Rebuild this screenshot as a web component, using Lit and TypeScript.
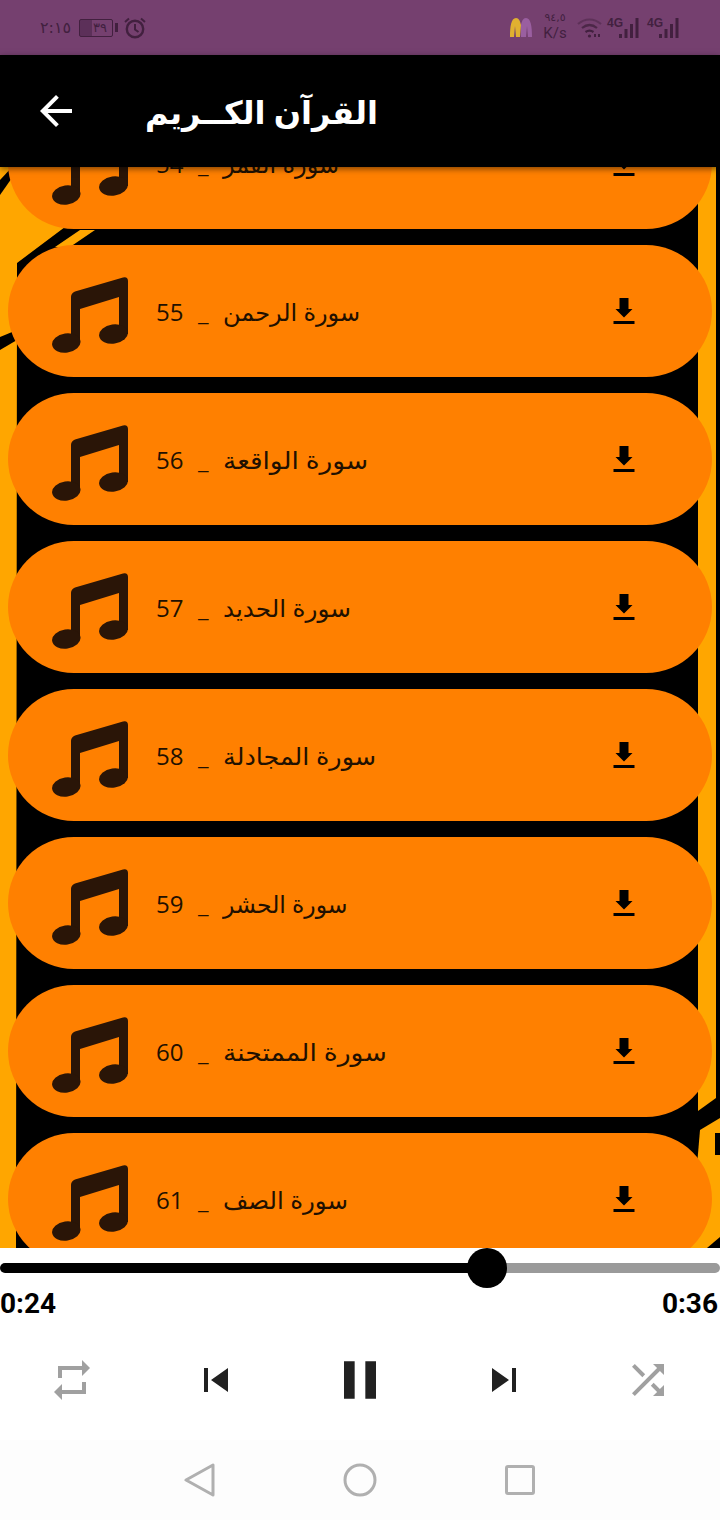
import { LitElement, html, css, svg } from "lit";
import { customElement } from "lit/decorators.js";

const SURAHS: [number, string, number][] = [
  [54, "سورة القمر", 1.0],
  [55, "سورة الرحمن", 1.0],
  [56, "سورة الواقعة", 1.1],
  [57, "سورة الحديد", 1.03],
  [58, "سورة المجادلة", 1.06],
  [59, "سورة الحشر", 0.98],
  [60, "سورة الممتحنة", 1.11],
  [61, "سورة الصف", 1.02],
];

const signal = svg`
  <rect x="0" y="16" width="3" height="4"/>
  <rect x="5.5" y="11" width="3" height="9"/>
  <rect x="11" y="6" width="3" height="14"/>
  <rect x="16.5" y="0" width="3" height="20"/>`;

@customElement("app-root")
export class AppRoot extends LitElement {
  static styles = css`
    :host { display: block; width: 720px; height: 1520px; overflow: hidden; font-family: "Open Sans", "DejaVu Sans", sans-serif; }
    .page { display: flex; flex-direction: column; height: 1520px; }

    .status { flex: 0 0 55px; background: #75406f; display: flex; justify-content: space-between; align-items: center; padding: 0 41px 0 40px; color: #42203f; }
    .status svg { display: block; fill: currentColor; }
    .group { display: flex; align-items: center; }
    .clock { font: 16px "DejaVu Sans", sans-serif; width: 29px; margin-right: 10px; }
    .battery { width: 34px; height: 18px; border: 1px solid #42203f; border-radius: 2px; box-sizing: border-box; font: 13px/15px "DejaVu Sans", sans-serif; text-align: center; padding-left: 8px; background: linear-gradient(90deg, #5c3059 0 12px, transparent 12px); }
    .nub { width: 3px; height: 9px; background: #42203f; margin: 0 6px 0 2px; }
    .speed { width: 24px; margin: 3px 10px 0 10px; font: 15px/17px Roboto, sans-serif; text-align: center; }
    .speed .v { font: 11px/14px "DejaVu Sans", sans-serif; display: block; margin-top: -5px; }
    .net { display: flex; align-items: flex-end; height: 20px; margin-left: 5px; }
    .net b { font: bold 12px/10px "Liberation Sans Narrow", "Liberation Sans", sans-serif; align-self: flex-start; width: 12px; }

    .bar { flex: 0 0 112px; background: #000; color: #fff; display: flex; align-items: center; padding-left: 32px; position: relative; z-index: 2; box-shadow: 0 2px 6px rgba(0,0,0,.5); }
    .bar svg { display: block; fill: #fff; }
    .title { margin: 2px 0 0 65px; font: bold 32px/44px "Open Sans", "DejaVu Sans", sans-serif; direction: rtl; }

    .list { flex: 0 0 1081px; position: relative; overflow: hidden; background: #000; }
    .bg { position: absolute; left: 0; top: 0; display: block; }
    .cards { position: relative; display: flex; flex-direction: column; gap: 16px; margin-top: -70px; padding: 0 8px; }
    .card { flex: 0 0 132px; background: #ff8000; border-radius: 66px; display: flex; align-items: center; padding: 0 76px 0 44px; color: #211000; }
    .note { display: block; margin-top: 8px; fill: #2a1507; }
    .label { margin: 2px 0 0 28px; flex: 1; display: flex; font-size: 24px; line-height: 32px; }
    .num { flex: 0 0 42px; }
    .sep { flex: 0 0 25px; }
    .name { display: block; direction: rtl; transform-origin: left center; white-space: nowrap; }
    .dl { display: block; fill: #000; }

    .player { flex: 0 0 192px; background: #fff; display: flex; flex-direction: column; }
    .seek { position: relative; height: 40px; display: flex; align-items: center; flex: none; }
    .played { height: 10px; width: 487px; background: #000; border-radius: 5px 0 0 5px; }
    .rest { height: 10px; flex: 1; background: #9a9a9a; border-radius: 0 5px 5px 0; }
    .thumb { position: absolute; left: 467px; top: 0; width: 40px; height: 40px; border-radius: 50%; background: #000; }
    .times { display: flex; justify-content: space-between; padding-right: 2px; font: bold 28px/32px Roboto, sans-serif; color: #000; flex: none; }
    .controls { flex: 1; display: flex; align-items: center; }
    .ctl { flex: 1; display: flex; justify-content: center; }
    .ctl svg { display: block; fill: #212121; }
    .ctl svg.off { fill: #a0a0a0; }

    .nav { flex: 0 0 80px; background: #fdfdfd; display: flex; align-items: center; }
    .nav div { flex: 0 0 160px; display: flex; justify-content: center; }
    .nav .pad { flex: 0 0 120px; }
    .nav svg { display: block; fill: none; stroke: #b0b0b0; stroke-width: 3; stroke-linejoin: round; }
  `;

  private background() {
    return html`<svg class="bg" width="720" height="1081" viewBox="0 167 720 1081">
      <rect x="0" y="167" width="720" height="1081" fill="#000"/>
      <g fill="#ffa600">
        <polygon points="0,167 145,167 17,263 16,1248 0,1248"/>
        <polygon points="80,230 95,230 70,247 55,247"/>
        <polygon points="698,167 716,167 716,1098 698,1111"/>
        <polygon points="700,1130 720,1118 720,1248 690,1248"/>
      </g>
      <g fill="#000">
        <polygon points="0,180 14,165 14,175 0,195"/>
        <polygon points="0,337 17,330 17,340 0,350"/>
        <rect x="715" y="1133" width="5" height="22"/>
        <polygon points="707,1248 720,1237 720,1248"/>
      </g>
    </svg>`;
  }

  private card(n: number, name: string, stretch: number) {
    return html`<div class="card">
      <svg class="note" width="76" height="76" viewBox="0 0 76 76">
        <path d="M19 66V20Q19 16 23 14.5L71 .4Q76 -.6 76 4V57H67V20L28 32V66Z"/>
        <ellipse cx="14.3" cy="66" rx="14.3" ry="9.6" transform="rotate(-8 14.3 66)"/>
        <ellipse cx="61.5" cy="57" rx="14.5" ry="9.6" transform="rotate(-8 61.5 57)"/>
      </svg>
      <div class="label">
        <span class="num">${n}</span>
        <span class="sep">_</span>
        <span class="name" style="transform: scaleX(${stretch})">${name}</span>
      </div>
      <svg class="dl" width="24" height="26" viewBox="0 0 24 26">
        <path d="M7.5 0h9v11h4L12 19.5 3.5 11h4z"/>
        <rect x="1.5" y="23" width="21" height="3"/>
      </svg>
    </div>`;
  }

  render() {
    return html`<div class="page">
      <div class="status">
        <div class="group">
          <div class="clock">٢:١٥</div>
          <div class="battery">٣٩</div>
          <div class="nub"></div>
          <svg width="22" height="22" viewBox="0 0 22 22" style="fill:none;stroke:#42203f;stroke-width:2.4">
            <circle cx="11" cy="12" r="8.2"/>
            <path d="M11 7v5.5l3.5 2.5M1 5l4-3.5M21 5l-4-3.5" stroke-width="2"/>
          </svg>
        </div>
        <div class="group">
          <svg width="24" height="20" viewBox="0 0 24 20">
            <path d="M1 19C1 9 2 0 7 0c3 0 4 3 5 7l-1 12H7L6 8 5 19Z" style="fill:#e0b030"/>
            <path d="M12 7c1-4 2-7 5-7 5 0 6 9 6 19h-4l-1-11-1 11h-5Z" style="fill:#9a5fa0"/>
          </svg>
          <div class="speed"><span class="v">٩٤,٥</span>K/s</div>
          <svg width="25" height="20" viewBox="0 0 25 20" style="fill:none;stroke:#42203f;stroke-width:2.2">
            <path d="M1 6c7-6 16-6 23 0" opacity=".45"/>
            <path d="M5 10c5-4 10-4 15 0" opacity=".8"/>
            <path d="M8.5 14c3-2 5-2 8 0"/>
            <circle cx="12.5" cy="18" r="1.6" style="fill:#42203f;stroke:none"/>
            <path d="M18 16v3M22 16v3" stroke-width="2"/>
          </svg>
          <div class="net"><b>4G</b><svg width="20" height="20" viewBox="0 0 20 20">${signal}</svg></div>
          <div class="net" style="margin-left:8px"><b>4G</b><svg width="20" height="20" viewBox="0 0 20 20">${signal}</svg></div>
        </div>
      </div>

      <div class="bar">
        <svg width="48" height="48" viewBox="0 0 24 24"><path d="M20 11H7.83l5.59-5.59L12 4l-8 8 8 8 1.41-1.41L7.83 13H20v-2z"/></svg>
        <div class="title">القرآن الكــريم</div>
      </div>

      <div class="list">
        ${this.background()}
        <div class="cards">${SURAHS.map(([n, s, k]) => this.card(n, s, k))}</div>
      </div>

      <div class="player">
        <div class="seek"><div class="played"></div><div class="rest"></div><div class="thumb"></div></div>
        <div class="times"><span>0:24</span><span>0:36</span></div>
        <div class="controls">
          <div class="ctl"><svg class="off" width="48" height="48" viewBox="0 0 24 24"><path d="M7 7h10v3l4-4-4-4v3H5v6h2V7zm10 10H7v-3l-4 4 4 4v-3h12v-6h-2v4z"/></svg></div>
          <div class="ctl"><svg width="48" height="48" viewBox="0 0 24 24"><path d="M6 6h2v12H6zm3.5 6l8.5 6V6z"/></svg></div>
          <div class="ctl"><svg width="64" height="64" viewBox="0 0 24 24"><path d="M6 19h4V5H6v14zm8-14v14h4V5h-4z"/></svg></div>
          <div class="ctl"><svg width="48" height="48" viewBox="0 0 24 24"><path d="M6 18l8.5-6L6 6v12zM16 6v12h2V6h-2z"/></svg></div>
          <div class="ctl"><svg class="off" width="48" height="48" viewBox="0 0 24 24"><path d="M10.59 9.17L5.41 4 4 5.41l5.17 5.17 1.42-1.41zM14.5 4l2.04 2.04L4 18.59 5.41 20 17.96 7.46 20 9.5V4h-5.5zm.33 9.41l-1.41 1.41 3.13 3.13L14.5 20H20v-5.5l-2.04 2.04-3.13-3.13z"/></svg></div>
        </div>
      </div>

      <div class="nav">
        <div class="pad"></div>
        <div><svg width="32" height="34" viewBox="0 0 32 34"><path d="M2 17L29 2V32Z"/></svg></div>
        <div><svg width="34" height="34" viewBox="0 0 34 34"><circle cx="17" cy="17" r="15"/></svg></div>
        <div><svg width="30" height="30" viewBox="0 0 30 30"><rect x="1.5" y="1.5" width="27" height="27" rx="1.5"/></svg></div>
      </div>
    </div>`;
  }
}
